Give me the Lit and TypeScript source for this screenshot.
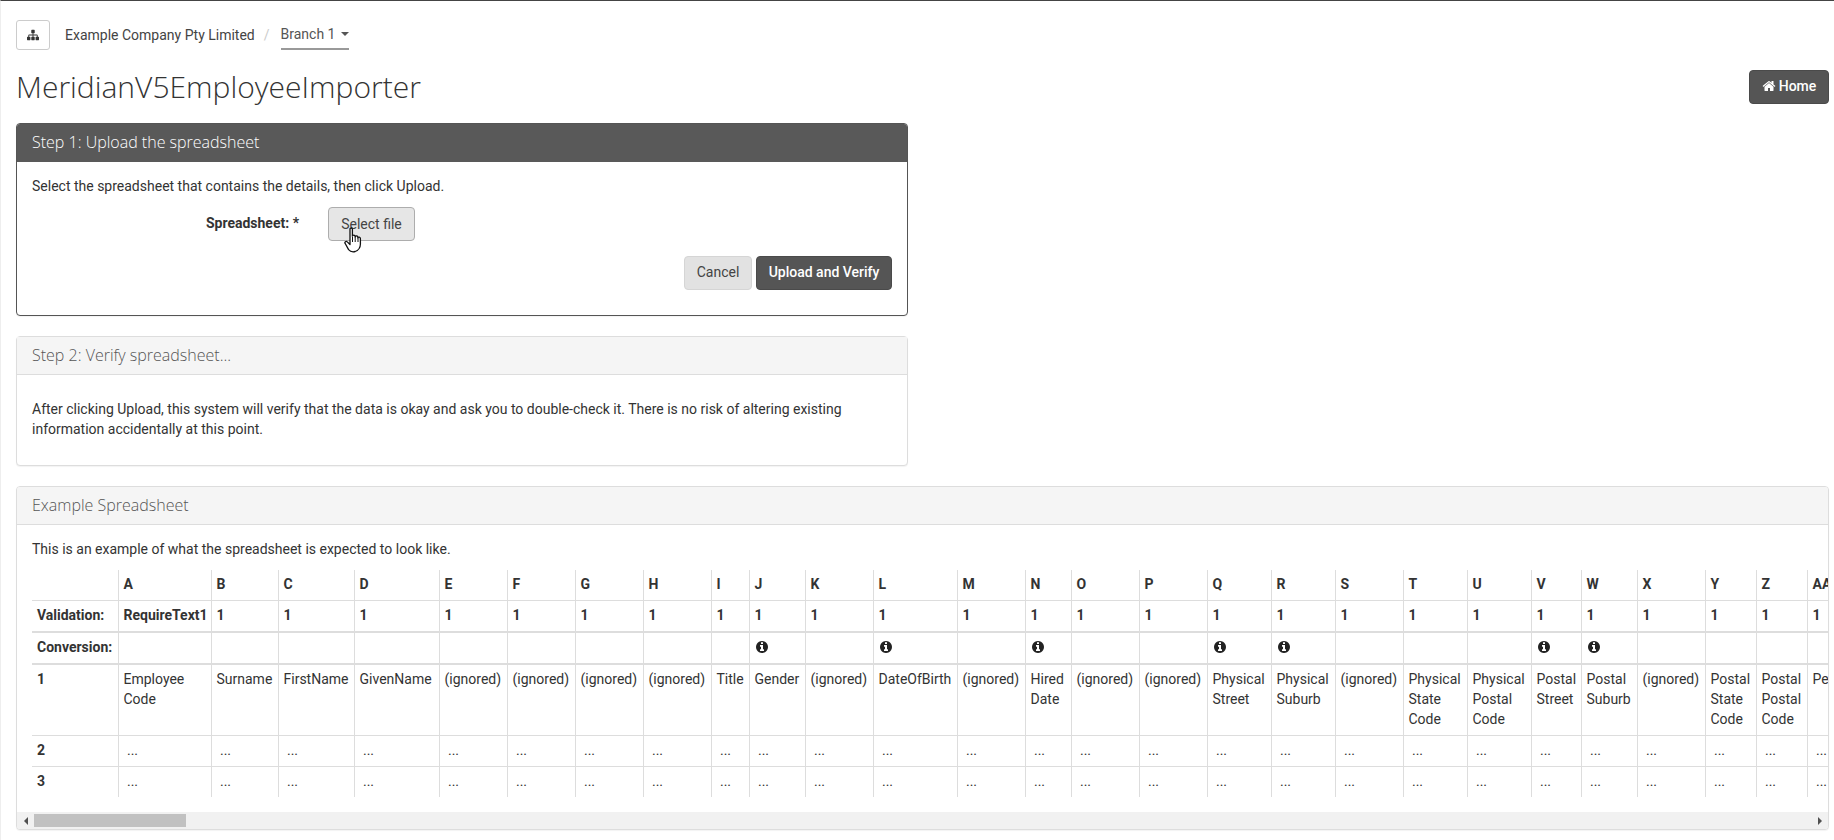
import { LitElement, html, css, svg } from "lit";
import { customElement } from "lit/decorators.js";

const INFO = "M1152 1376v-160q0-14-9-23t-23-9h-96v-512q0-14-9-23t-23-9h-320q-14 0-23 9t-9 23v160q0 14 9 23t23 9h96v320h-96q-14 0-23 9t-9 23v160q0 14 9 23t23 9h448q14 0 23-9t9-23zm-128-896v-160q0-14-9-23t-23-9h-192q-14 0-23 9t-9 23v160q0 14 9 23t23 9h192q14 0 23-9t9-23zm640 416q0 209-103 385.500t-279.500 279.500-385.500 103-385.500-103-279.500-279.500-103-385.500 103-385.500 279.500-279.500 385.500-103 385.500 103 279.500 279.500 103 385.500z";
const HOME = "M1472 992v480q0 26-19 45t-45 19h-384v-384h-256v384h-384q-26 0-45-19t-19-45v-480q0-1 .5-3t.5-3l575-474 575 474q1 2 1 6zm223-69l-62 74q-8 9-21 11h-3q-13 0-21-7l-692-577-692 577q-12 8-24 7-13-2-21-11l-62-74q-8-10-7-23.500t11-21.500l719-599q32-26 76-26t76 26l244 204v-195q0-14 9-23t23-9h192q14 0 23 9t9 23v408l219 182q10 8 11 21.500t-7 23.500z";
const SITEMAP = "M1792 1248v320q0 40-28 68t-68 28h-320q-40 0-68-28t-28-68v-320q0-40 28-68t68-28h96v-192h-512v192h96q40 0 68 28t28 68v320q0 40-28 68t-68 28h-320q-40 0-68-28t-28-68v-320q0-40 28-68t68-28h96v-192h-512v192h96q40 0 68 28t28 68v320q0 40-28 68t-68 28h-320q-40 0-68-28t-28-68v-320q0-40 28-68t68-28h96v-192q0-52 38-90t90-38h512v-192h-96q-40 0-68-28t-28-68v-320q0-40 28-68t68-28h320q40 0 68 28t28 68v320q0 40-28 68t-68 28h-96v192h512q52 0 90 38t38 90v192h96q40 0 68 28t28 68z";

const icon = (d: string, cls: string) =>
  html`<svg class=${cls} viewBox="0 0 1792 1792">${svg`<path d=${d} fill="currentColor"></path>`}</svg>`;

const LABEL_W = 86;
const COLS: [string, string, string, boolean, number][] = [
  ["A", "RequireText1", "Employee Code", false, 93],
  ["B", "1", "Surname", false, 67],
  ["C", "1", "FirstName", false, 76],
  ["D", "1", "GivenName", false, 85],
  ["E", "1", "(ignored)", false, 68],
  ["F", "1", "(ignored)", false, 68],
  ["G", "1", "(ignored)", false, 68],
  ["H", "1", "(ignored)", false, 68],
  ["I", "1", "Title", false, 38],
  ["J", "1", "Gender", true, 56],
  ["K", "1", "(ignored)", false, 68],
  ["L", "1", "DateOfBirth", true, 84],
  ["M", "1", "(ignored)", false, 68],
  ["N", "1", "Hired Date", true, 46],
  ["O", "1", "(ignored)", false, 68],
  ["P", "1", "(ignored)", false, 68],
  ["Q", "1", "Physical Street", true, 64],
  ["R", "1", "Physical Suburb", true, 64],
  ["S", "1", "(ignored)", false, 68],
  ["T", "1", "Physical State Code", false, 64],
  ["U", "1", "Physical Postal Code", false, 64],
  ["V", "1", "Postal Street", true, 50],
  ["W", "1", "Postal Suburb", true, 56],
  ["X", "1", "(ignored)", false, 68],
  ["Y", "1", "Postal State Code", false, 51],
  ["Z", "1", "Postal Postal Code", false, 51],
  ["AA", "1", "PersonalEmail", false, 96],
];
const TABLE_W = COLS.reduce((s, c) => s + c[4], LABEL_W);

@customElement("app-root")
export class AppRoot extends LitElement {
  static styles = css`
    :host {
      display: block;
      height: 840px;
      box-sizing: border-box;
      overflow: hidden;
      border-top: 1px solid #444;
      border-left: 1px solid #eee;
      padding: 19px 5px 0 15px;
      background: #fff;
      font-family: Roboto, sans-serif;
      font-size: 14px;
      line-height: 20px;
      color: #333;
    }
    .crumbs { display: flex; align-items: center; height: 30px; }
    .tree {
      box-sizing: border-box;
      width: 34px;
      height: 30px;
      border: 1px solid #ccc;
      border-radius: 3px;
      display: flex;
      align-items: center;
      justify-content: center;
      margin-right: 15px;
    }
    .tree-icon { width: 12px; height: 12px; color: #333; }
    .company { color: #444; }
    .sep { color: #ccc; margin: 0 11px 0 9px; }
    .branch {
      box-sizing: border-box;
      height: 30px;
      display: flex;
      align-items: center;
      gap: 6px;
      border-bottom: 2px solid #999;
      color: #555;
      padding-bottom: 1px;
    }
    .caret {
      width: 0;
      height: 0;
      border-left: 4px solid transparent;
      border-right: 4px solid transparent;
      border-top: 4px solid #555;
    }
    .title-row {
      display: flex;
      justify-content: space-between;
      align-items: center;
      margin-top: 20px;
      height: 33px;
    }
    h1 {
      margin: 0;
      font-family: "Open Sans", sans-serif;
      font-weight: 300;
      font-size: 30px;
      line-height: 33px;
      color: #333;
    }
    .home {
      box-sizing: border-box;
      height: 34px;
      width: 80px;
      background: #555;
      border: 1px solid #4a4a4a;
      border-radius: 4px;
      color: #fff;
      font-weight: 500;
      display: flex;
      align-items: center;
      justify-content: center;
      gap: 3px;
      padding-bottom: 2px;
    }
    .home-icon { width: 14px; height: 14px; }
    .panel {
      box-sizing: border-box;
      border: 1px solid #ddd;
      border-radius: 4px;
      box-shadow: 0 1px 1px rgba(0, 0, 0, 0.05);
      background: #fff;
    }
    .p1 { width: 892px; margin-top: 20px; border-color: #555; height: 193px; overflow: hidden; }
    .p2 { width: 892px; margin-top: 20px; height: 130px; }
    .p3 { margin-top: 20px; height: 344px; overflow: hidden; display: flex; flex-direction: column; }
    .head {
      box-sizing: border-box;
      height: 38px;
      padding: 0 15px 2px;
      display: flex;
      align-items: center;
      background: #f5f5f5;
      border-bottom: 1px solid #ddd;
      font-family: "Open Sans", sans-serif;
      font-weight: 300;
      font-size: 16px;
      color: #555;
    }
    .p1 .head { background: #595959; border-bottom-color: #595959; color: #fff; }
    p { margin: 0; }
    .p1 .body { padding: 14px 15px 0; }
    .form-row { display: flex; align-items: center; margin-top: 11px; height: 34px; }
    .form-label { width: 267px; text-align: right; font-weight: 700; margin-right: 29px; margin-top: -2px; }
    .btn {
      box-sizing: border-box;
      height: 34px;
      border-radius: 4px;
      display: flex;
      align-items: center;
      justify-content: center;
    }
    .select { position: relative; width: 87px; background: #e6e6e6; border: 1px solid #adadad; color: #444; }
    .hand { position: absolute; left: 15px; top: 19px; width: 20px; height: 26px; }
    .actions { display: flex; justify-content: flex-end; gap: 4px; margin-top: 15px; }
    .cancel { width: 68px; background: #e2e2e2; border: 1px solid #d5d5d5; color: #444; padding-bottom: 2px; }
    .upload { width: 136px; background: #555; border: 1px solid #4a4a4a; color: #fff; font-weight: 500; padding-bottom: 2px; }
    .p2 .body { padding: 24px 15px 0; }
    .p3 .body { flex: 1; padding: 14px 0 0 15px; min-height: 0; }
    .wrap { overflow: hidden; margin-top: 11px; }
    table { border-collapse: collapse; table-layout: fixed; }
    th, td {
      padding: 4px 5px 6px;
      vertical-align: top;
      text-align: left;
      border-left: 1px solid #ddd;
      border-top: 1px solid #ddd;
      overflow: hidden;
    }
    tr:first-child > * { border-top: 0; }
    tr > :first-child { border-left: 0; white-space: nowrap; }
    th { font-weight: 700; }
    .thick > * { border-top-width: 2px; }
    .conv { height: 20px; }
    .info { width: 14px; height: 14px; display: block; margin-top: 3px; color: #222; }
    .dots { white-space: nowrap; }
    .bar {
      height: 17px;
      background: #f1f1f1;
      display: flex;
      align-items: center;
      flex: none;
    }
    .arrow { width: 17px; display: flex; justify-content: center; flex: none; }
    .al { border-top: 4px solid transparent; border-bottom: 4px solid transparent; border-right: 4px solid #505050; }
    .ar { border-top: 4px solid transparent; border-bottom: 4px solid transparent; border-left: 4px solid #505050; }
    .thumb { width: 152px; height: 13px; background: #c1c1c1; }
    .spacer { flex: 1; }
  `;

  render() {
    return html`
      <nav class="crumbs">
        <span class="tree">${icon(SITEMAP, "tree-icon")}</span>
        <span class="company">Example Company Pty Limited</span>
        <span class="sep">/</span>
        <span class="branch">Branch 1 <span class="caret"></span></span>
      </nav>
      <div class="title-row">
        <h1>MeridianV5EmployeeImporter</h1>
        <div class="home">${icon(HOME, "home-icon")}<span>Home</span></div>
      </div>
      <section class="panel p1">
        <div class="head">Step 1: Upload the spreadsheet</div>
        <div class="body">
          <p>Select the spreadsheet that contains the details, then click Upload.</p>
          <div class="form-row">
            <div class="form-label">Spreadsheet: *</div>
            <div class="btn select">
              Select file
              <svg class="hand" viewBox="0 0 20 26">
                <path d="M6 2.2c0-1.600 2.400-1.600 2.400 0v7c.2-1.500 2.500-1.500 2.700 .1l.1 .6c.3-1.400 2.500-1.300 2.600 .3l.1 .7c.4-1.100 2.400-.9 2.500 .7v5.400c0 3-1.800 6.500-5.200 7.500-2.600 .7-5 .1-6.600-1.900L1.200 16.500c-1-1.300 .9-2.900 2.100-1.600L6 17.500z" fill="#fff" stroke="#111" stroke-width="1.300" stroke-linejoin="round"></path>
                <path d="M8.500 10v5M11.200 10v5M14 11v4" stroke="#111" stroke-width="1" fill="none"></path>
              </svg>
            </div>
          </div>
          <div class="actions">
            <div class="btn cancel">Cancel</div>
            <div class="btn upload">Upload and Verify</div>
          </div>
        </div>
      </section>
      <section class="panel p2">
        <div class="head">Step 2: Verify spreadsheet...</div>
        <div class="body">
          <p>After clicking Upload, this system will verify that the data is okay and ask you to double-check it. There is no risk of altering existing information accidentally at this point.</p>
        </div>
      </section>
      <section class="panel p3">
        <div class="head">Example Spreadsheet</div>
        <div class="body">
          <p>This is an example of what the spreadsheet is expected to look like.</p>
          <div class="wrap">
            <table style="width:${TABLE_W}px">
              <colgroup>
                <col style="width:${LABEL_W}px" />
                ${COLS.map((c) => html`<col style="width:${c[4]}px" />`)}
              </colgroup>
              <tbody>
                <tr><th></th>${COLS.map((c) => html`<th>${c[0]}</th>`)}</tr>
                <tr><th>Validation:</th>${COLS.map((c) => html`<th>${c[1]}</th>`)}</tr>
                <tr class="thick">
                  <th>Conversion:</th>
                  ${COLS.map((c) => html`<td>${c[3] ? icon(INFO, "info") : html`<div class="conv"></div>`}</td>`)}
                </tr>
                <tr class="thick"><th>1</th>${COLS.map((c) => html`<td>${c[2]}</td>`)}</tr>
                <tr><th>2</th>${COLS.map(() => html`<td class="dots">&nbsp;...</td>`)}</tr>
                <tr><th>3</th>${COLS.map(() => html`<td class="dots">&nbsp;...</td>`)}</tr>
              </tbody>
            </table>
          </div>
        </div>
        <div class="bar">
          <span class="arrow"><span class="al"></span></span>
          <span class="thumb"></span>
          <span class="spacer"></span>
          <span class="arrow"><span class="ar"></span></span>
        </div>
      </section>
    `;
  }
}
